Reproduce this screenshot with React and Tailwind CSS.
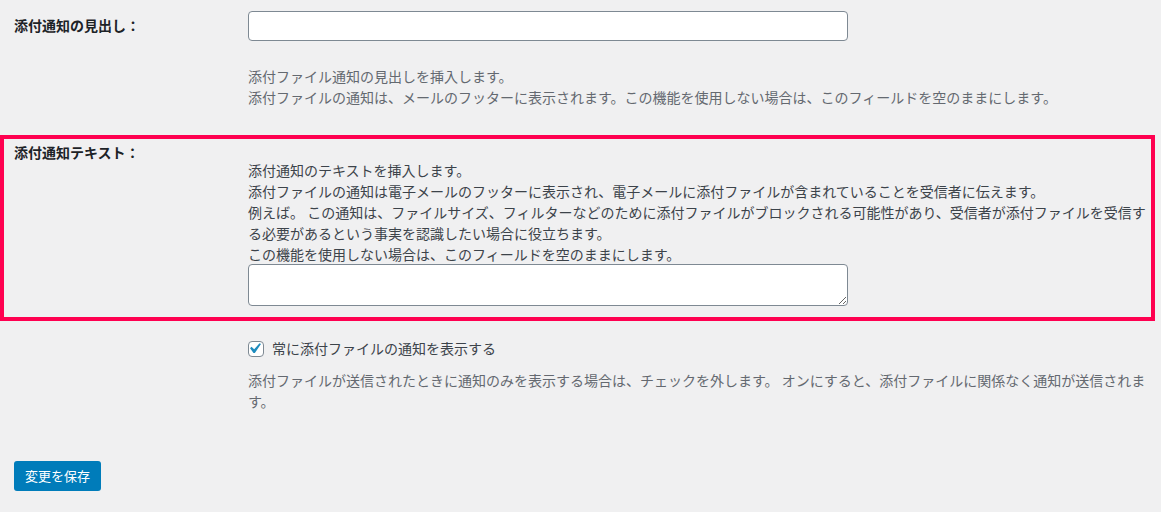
import React from "react";

function CheckBox() {
  return (
    <span className="relative inline-block w-4 h-4 shrink-0 rounded-[4px] border border-[#7e8993] bg-white">
      <svg
        viewBox="0 0 20 20"
        className="absolute left-[-5px] top-[-4px] w-[21px] h-[21px]"
      >
        <path
          d="M14.83 4.89l1.34.94-5.81 8.38H9.02L5.78 9.67l1.34-1.25 2.57 2.4z"
          fill="#1e8cbe"
        />
      </svg>
    </span>
  );
}

export default function App() {
  return (
    <div className="min-h-[512px] w-full bg-[#f0f0f1] font-['Noto_Sans_CJK_JP','Noto_Sans',sans-serif] text-[14px] leading-[21px] text-[#3c434a]">
      {/* Row 1 */}
      <div className="flex pt-[11px]">
        <div className="w-[248px] shrink-0 pl-[14px] pt-[4px] font-bold text-[#1d2327]">
          添付通知の見出し：
        </div>
        <div className="flex-1 pr-[6px]">
          <input
            type="text"
            className="block w-[600px] h-[30px] rounded-[4px] border border-[#7e8993] bg-white px-2 outline-none"
          />
          <div className="mt-[25px] text-[#646970]">
            <p>添付ファイル通知の見出しを挿入します。</p>
            <p>
              添付ファイルの通知は、メールのフッターに表示されます。この機能を使用しない場合は、このフィールドを空のままにします。
            </p>
          </div>
        </div>
      </div>

      {/* Row 2 (highlighted) */}
      <div className="mt-[27px] w-[1155px] h-[186px] border-4 border-[#ff0050] flex">
        <div className="w-[244px] shrink-0 pl-[10px] pt-[3px] font-bold text-[#1d2327]">
          添付通知テキスト：
        </div>
        <div className="flex-1 pt-[21px]">
          <p>添付通知のテキストを挿入します。</p>
          <p>
            添付ファイルの通知は電子メールのフッターに表示され、電子メールに添付ファイルが含まれていることを受信者に伝えます。
          </p>
          <p>
            例えば。 この通知は、ファイルサイズ、フィルターなどのために添付ファイルがブロックされる可能性があり、受信者が添付ファイルを受信する必要があるという事実を認識したい場合に役立ちます。
          </p>
          <p>この機能を使用しない場合は、このフィールドを空のままにします。</p>
          <textarea className="block mt-[-1px] w-[600px] h-[42px] rounded-[4px] border border-[#7e8993] bg-white outline-none" />
        </div>
      </div>

      {/* Row 3 */}
      <div className="flex mt-[17px]">
        <div className="w-[248px] shrink-0" />
        <div className="flex-1 pr-[6px]">
          <label className="flex items-center gap-2">
            <CheckBox />
            <span>常に添付ファイルの通知を表示する</span>
          </label>
          <p className="mt-[11px] text-[#646970]">
            添付ファイルが送信されたときに通知のみを表示する場合は、チェックを外します。 オンにすると、添付ファイルに関係なく通知が送信されます。
          </p>
        </div>
      </div>

      {/* Submit */}
      <div className="pl-[14px] mt-[49px]">
        <button className="h-[30px] px-[11px] rounded-[3px] bg-[#007cba] text-white text-[13px] leading-[28px]">
          変更を保存
        </button>
      </div>
    </div>
  );
}
